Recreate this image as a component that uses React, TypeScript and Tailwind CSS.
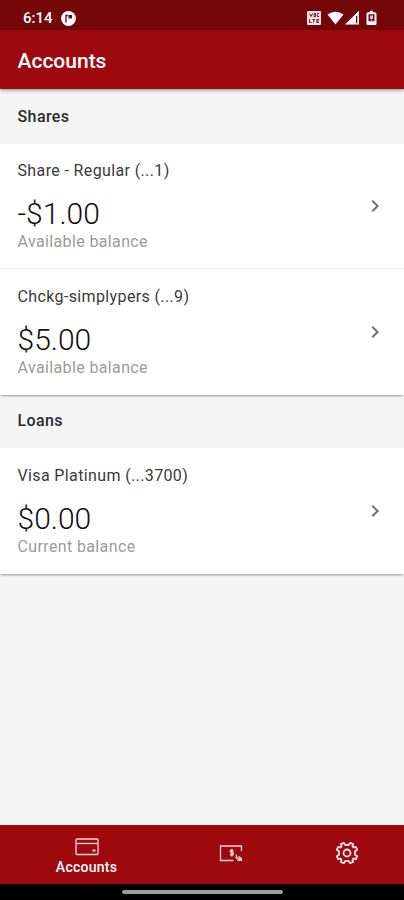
import { MdChevronRight } from "react-icons/md";

type Account = {
  name: string;
  amount: string;
  label: string;
};

const shares: Account[] = [
  { name: "Share - Regular (...1)", amount: "-$1.00", label: "Available balance" },
  { name: "Chckg-simplypers (...9)", amount: "$5.00", label: "Available balance" },
];

const loans: Account[] = [
  { name: "Visa Platinum (...3700)", amount: "$0.00", label: "Current balance" },
];

function StatusBar() {
  return (
    <div className="flex h-[30px] items-center justify-between bg-[#75070b] pr-[26px] pl-[23px] pt-[6px] text-white">
      <div className="flex items-center gap-2">
        <span className="text-[15px] leading-none font-medium">6:14</span>
        <svg width="15" height="15" viewBox="0 0 15 15">
          <circle cx="7.5" cy="7.5" r="7.4" fill="#fff" />
          <path d="M5 11.500V4.500h2" fill="none" stroke="#75070b" strokeWidth="1.300" />
          <path d="M7.500 4h3.500v3.500h-3.500z" fill="#75070b" />
        </svg>
      </div>
      <svg width="72" height="16" viewBox="0 0 72 16" fill="#fff">
        <rect x="1" y="1" width="14" height="14" rx="1" fill="#f3e3e3" />
        <path
          d="M3.500 3.500l1.500 3 1.500-3M8 3.500h1.500v3H8zM13 3.500h-1.700v3H13M3.500 9v3.500h2M6.500 9.500h2.500M7.800 9.500v3.200M13 9.500h-2.200v3H13M11 11h2"
          fill="none"
          stroke="#75070b"
          strokeWidth="0.9"
        />
        <path d="M21.500 4.500Q29.500-1 37.500 4.500L29.500 14.500z" />
        <path fillRule="evenodd" d="M39 14.500L53 .8v13.700zM50 6v7.300h1.300V6z" />
        <path
          fillRule="evenodd"
          d="M64 .8h3v1.500h1.700q1.800 0 1.800 1.800v9.400q0 1.500-1.500 1.500h-7q-1.500 0-1.500-1.500V4.100q0-1.800 1.800-1.800H64zM62.500 4.300v7h6v-7z"
        />
        <path d="M64 5.500h3v3.500h-3zM64.800 9.700h1.500v1h-1.500z" fill="#e3c4c5" />
      </svg>
    </div>
  );
}

function AccountRow({ account, divider }: { account: Account; divider: boolean }) {
  return (
    <div
      className={`${
        divider ? "border-b border-[#ececec]" : ""
      } flex h-[125.5px] items-center justify-between bg-white pr-[17px] pl-[17.5px]`}
    >
      <div className="flex flex-col pt-px">
        <span className="text-base leading-5 tracking-[0.37px] text-[#3a3a3a]">{account.name}</span>
        <span className="mt-[15px] text-[30px] leading-9 font-light text-[#111]">{account.amount}</span>
        <span className="text-base leading-5 tracking-[0.37px] text-[#9b9b9b]">{account.label}</span>
      </div>
      <MdChevronRight className="size-6 text-[#707070]" />
    </div>
  );
}

function Section({ title, accounts }: { title: string; accounts: Account[] }) {
  return (
    <section>
      <h2 className="flex h-[53.5px] items-center bg-[#f5f5f5] pl-[17.5px] text-base font-medium tracking-[0.4px] text-[#2a2a2a]">
        {title}
      </h2>
      <div className="relative z-10 shadow-[0_2px_2px_-1px_rgba(0,0,0,0.4)]">
        {accounts.map((account, i) => (
          <AccountRow key={account.name} account={account} divider={i < accounts.length - 1} />
        ))}
      </div>
    </section>
  );
}

function BottomNav() {
  return (
    <nav className="flex h-[59px] bg-[#9e090e] text-white">
      <button className="flex w-[173px] flex-col items-center pt-[13px]">
        <svg width="24" height="18" viewBox="0 0 24 18" fill="none" stroke="#f6d5d6" strokeWidth="1.3">
          <rect x="1" y="1" width="22" height="15.500" rx="1" />
          <path d="M1 5.500h22" />
          <path d="M17.500 12.500h3" strokeWidth="2" />
        </svg>
        <span className="mt-[3px] text-sm leading-4 font-medium tracking-[0.25px]">Accounts</span>
      </button>
      <button className="flex w-[116px] items-center justify-center pb-[3px]">
        <svg width="24" height="18" viewBox="0 0 24 18" fill="none" stroke="#f6d5d6" strokeWidth="1.3">
          <path d="M14.500 16.500H1.500V2H22.500v5" />
          <path d="M14.500 6.700q-3.200-1.200-3.200.6 0 1 1.600 1.300 1.700.4 1.500 1.500-.4 1.500-3.400.4M12.800 5v7.500" strokeWidth="1.500" />
          <path d="M17.300 10.500v3.500h2" />
          <path d="M19 11.500l4 2.500v3h-4.500v-2.500h1.500z" fill="#f6d5d6" stroke="none" />
        </svg>
      </button>
      <button className="flex flex-1 items-center justify-center pb-[3px]">
        <svg width="24" height="24" viewBox="0 0 24 24" fill="none" stroke="#fbe4e4" strokeWidth="1.800" strokeLinejoin="round">
          <path d="M8.800 1.800L10.300 4h3.400L15.200 1.800 18.200 3.100 17.500 5.300 18.700 6.500 20.900 5.800 22.200 8.800 20 10.300v3.400L22.200 15.200 20.900 18.200 18.700 17.500 17.500 18.700 18.200 20.900 15.200 22.200 13.700 20h-3.400L8.800 22.200 5.800 20.900 6.500 18.700 5.300 17.500 3.100 18.200 1.800 15.200 4 13.700v-3.400L1.800 8.800 3.100 5.800 5.300 6.500 6.500 5.300 5.800 3.100z" />
          <circle cx="12" cy="12" r="3.500" />
        </svg>
      </button>
    </nav>
  );
}

export default function App() {
  return (
    <div className="flex h-[900px] w-[404px] flex-col overflow-hidden bg-[#f5f5f5] font-['Roboto',sans-serif]">
      <StatusBar />
      <header className="z-20 flex h-[59px] items-center bg-[#9e090e] pt-1 pl-[17.5px] shadow-[0_1px_4px_rgba(0,0,0,0.45)]">
        <h1 className="text-[21px] font-medium text-white">Accounts</h1>
      </header>
      <main className="flex-1 pt-px">
        <Section title="Shares" accounts={shares} />
        <Section title="Loans" accounts={loans} />
      </main>
      <BottomNav />
      <div className="flex h-4 items-center justify-center bg-black">
        <div className="h-1 w-[161px] rounded-full bg-[#9c9c9c]" />
      </div>
    </div>
  );
}
